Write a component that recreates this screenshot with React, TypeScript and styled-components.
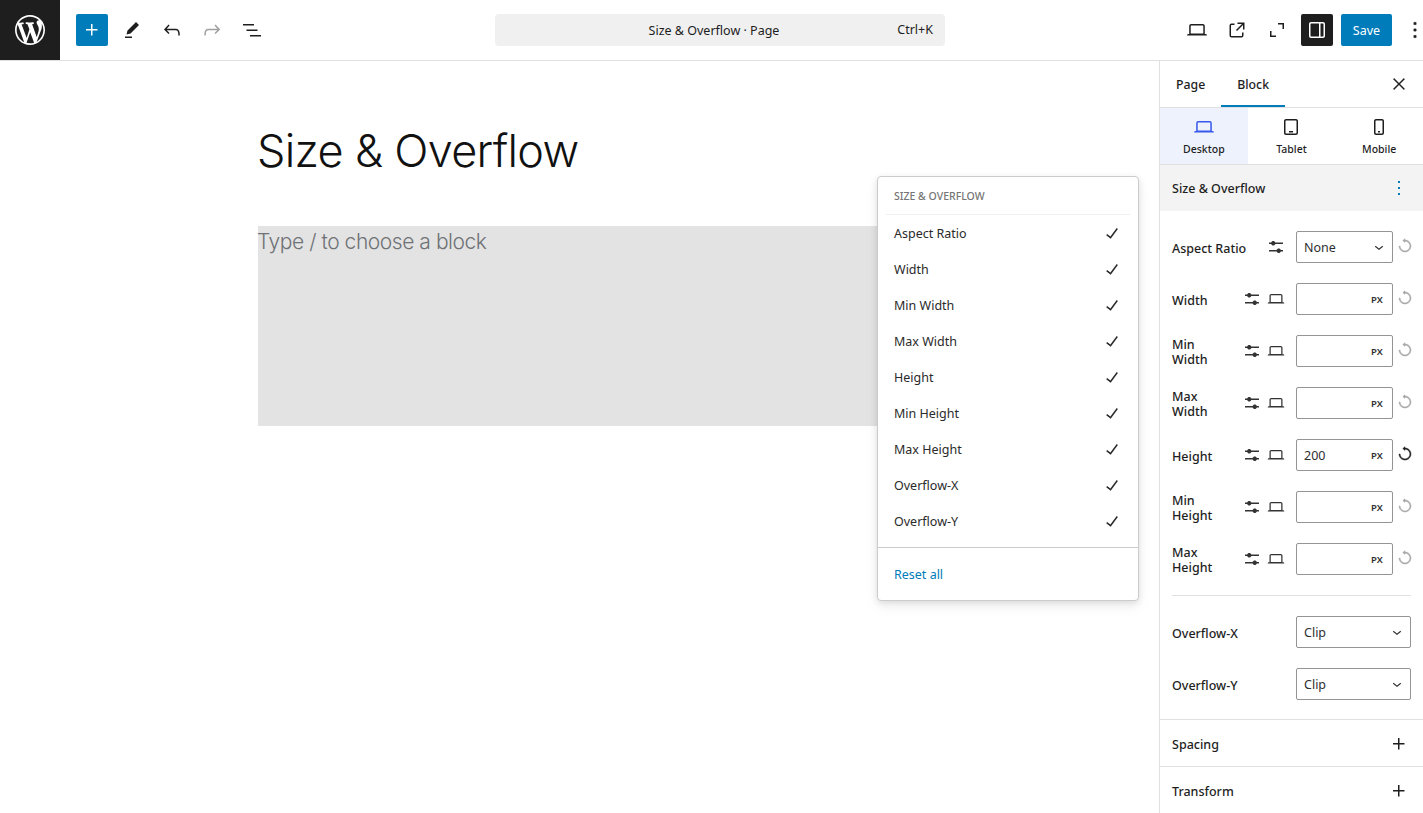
import { FC } from "react";
import styled, { createGlobalStyle } from "styled-components";

const GlobalStyle = createGlobalStyle`
	html, body {
		margin: 0;
		height: 100%;
		overflow: hidden;
		background: #fff;
	}
	body {
		font-family: "Noto Sans", "Open Sans", sans-serif;
		font-size: 13px;
		color: #1e1e1e;
	}
	* {
		box-sizing: border-box;
	}
`;

const paths = {
	plus: "M11 12.5V17.5H12.5V12.5H17.5V11H12.5V6H11V11H6V12.5H11Z",
	pencil: "m19 7-3-3-8.5 8.5-1 4 4-1L19 7Zm-7 11.5H5V20h7v-1.5Z",
	undo: "M18.3 11.7c-.6-.6-1.4-.9-2.3-.9H6.7l2.9-3.3-1.1-1-4.5 5L8.5 16l1-1-2.7-2.7H16c.5 0 .9.2 1.3.5 1 1 1 3.4 1 4.5v.3h1.5v-.2c0-1.5 0-4.3-1.5-5.7z",
	redo: "M15.6 6.5l-1.1 1 2.9 3.3H8c-.9 0-1.7.3-2.3.9-1.4 1.5-1.4 4.2-1.4 5.6v.2h1.5v-.3c0-1.1 0-3.5 1-4.5.3-.3.7-.5 1.3-.5h9.2L14.5 15l1.1 1.1 4.6-4.6-4.6-5z",
	list: "M3 6h11v1.5H3V6Zm3.5 5.5h11V13h-11v-1.5ZM21 17H10v1.5h11V17Z",
	desktop: "M20.5 16h-.7V8c0-1.1-.9-2-2-2H6.2c-1.1 0-2 .9-2 2v8h-.7c-.8 0-1.5.7-1.5 1.5h20c0-.8-.7-1.5-1.5-1.5zM5.7 8c0-.3.2-.5.5-.5h11.6c.3 0 .5.2.5.5v7.6H5.7V8z",
	external: "M19.5 4.5h-7V6h4.44l-5.97 5.97 1.06 1.06L18 7.06v4.44h1.5v-7Zm-13 1a2 2 0 0 0-2 2v10a2 2 0 0 0 2 2h10a2 2 0 0 0 2-2v-3H17v3a.5.5 0 0 1-.5.5h-10a.5.5 0 0 1-.5-.5v-10a.5.5 0 0 1 .5-.5h3V5.5h-3Z",
	fullscreen: "M13 5h6v6h-1.5V6.5H13V5ZM5 13h1.5v4.5H11V19H5v-6Z",
	drawer: "M18 4H6c-1.1 0-2 .9-2 2v12c0 1.1.9 2 2 2h12c1.1 0 2-.9 2-2V6c0-1.1-.9-2-2-2zm-4 14.5H6c-.3 0-.5-.2-.5-.5V6c0-.3.2-.5.5-.5h8v13zm4.5-.5c0 .3-.2.5-.5.5h-2.5v-13H18c.3 0 .5.2.5.5v12z",
	more: "M13 19h-2v-2h2v2zm0-6h-2v-2h2v2zm0-6h-2V5h2v2z",
	close: "m13.06 12 6.47-6.47-1.06-1.06L12 10.94 5.53 4.47 4.47 5.53 10.94 12l-6.47 6.47 1.06 1.06L12 13.06l6.47 6.47 1.06-1.06L13.06 12Z",
	tablet: "M17 4H7c-1.1 0-2 .9-2 2v12c0 1.1.9 2 2 2h10c1.1 0 2-.9 2-2V6c0-1.1-.9-2-2-2zm.5 14c0 .3-.2.5-.5.5H7c-.3 0-.5-.2-.5-.5V6c0-.3.2-.5.5-.5h10c.3 0 .5.2.5.5v12zm-7.5-.5h4V16h-4v1.5z",
	mobile: "M15 4H9c-1.1 0-2 .9-2 2v12c0 1.1.9 2 2 2h6c1.1 0 2-.9 2-2V6c0-1.1-.9-2-2-2zm.5 14c0 .3-.2.5-.5.5H9c-.3 0-.5-.2-.5-.5V6c0-.3.2-.5.5-.5h6c.3 0 .5.2.5.5v12zm-4.5-.5h2V16h-2v1.5z",
	check: "M16.7 7.1l-6.3 8.5-3.3-2.5-.9 1.2 4.5 3.4L17.9 8z",
	sliders:
		"m19 7.5h-7.628c-.3089-.87389-1.1423-1.5-2.122-1.5-.97966 0-1.81309.62611-2.12197 1.5h-2.12803v1.5h2.12803c.30888.87389 1.14231 1.5 2.12197 1.5.9797 0 1.8131-.62611 2.122-1.5h7.628zm0 7.5h-2.128c-.3089-.8739-1.1423-1.5-2.122-1.5s-1.8131.6261-2.122 1.5h-7.628v1.5h7.628c.3089.8739 1.1423 1.5 2.122 1.5s1.8131-.6261 2.122-1.5h2.128z",
	reset: "M12 4V2.2L9 4.8l3 2.5V5.5c3.6 0 6.5 2.9 6.5 6.5s-2.9 6.5-6.5 6.5-6.5-2.9-6.5-6.5H4c0 4.4 3.6 8 8 8s8-3.6 8-8-3.6-8-8-8z",
	chevron: "M17.5 11.6L12 16l-5.5-4.4.9-1.2L12 14l4.5-3.6 1 1.2z",
};

const Icon: FC<{ name: keyof typeof paths; size?: number }> = ({ name, size = 24 }) => (
	<svg width={size} height={size} viewBox="0 0 24 24" fill="currentColor">
		<path d={paths[name]} />
	</svg>
);

const Page = styled.div`
	width: 1423px;
	height: 813px;
	display: flex;
	flex-direction: column;
	overflow: hidden;
`;

const TopBar = styled.header`
	flex: none;
	height: 61px;
	display: flex;
	align-items: center;
	border-bottom: 1px solid #e0e0e0;
`;

const LogoTile = styled.div`
	width: 60px;
	height: 60px;
	background: #1e1e1e;
	color: #fff;
	display: flex;
	align-items: center;
	justify-content: center;
`;

const LeftTools = styled.div`
	width: 435px;
	display: flex;
	align-items: center;
	padding-left: 16px;
`;

const AddButton = styled.div`
	width: 32px;
	height: 32px;
	margin-right: 4px;
	border-radius: 2px;
	background: #007cba;
	color: #fff;
	display: flex;
	align-items: center;
	justify-content: center;
`;

const ToolButton = styled.div<{ $muted?: boolean }>`
	width: 40px;
	height: 32px;
	color: ${({ $muted }) => ($muted ? "#a0a0a0" : "#1e1e1e")};
	display: flex;
	align-items: center;
	justify-content: center;
`;

const CommandBar = styled.div`
	position: relative;
	width: 450px;
	height: 32px;
	padding-right: 12px;
	border-radius: 4px;
	background: #f0f0f0;
	display: flex;
	align-items: center;
	justify-content: center;
	font-size: 12.5px;
`;

const Shortcut = styled.span`
	position: absolute;
	right: 12px;
	top: 7px;
`;

const RightTools = styled.div`
	flex: 1;
	display: flex;
	align-items: center;
	justify-content: flex-end;
`;

const SidebarToggle = styled.div`
	width: 32px;
	height: 32px;
	margin-left: 4px;
	border-radius: 2px;
	background: #1e1e1e;
	color: #fff;
	display: flex;
	align-items: center;
	justify-content: center;
`;

const SaveButton = styled.div`
	width: 51px;
	height: 32px;
	margin-left: 8px;
	border-radius: 2px;
	background: #007cba;
	color: #fff;
	font-size: 12.5px;
	display: flex;
	align-items: center;
	justify-content: center;
`;

const OptionsButton = styled.div`
	width: 16px;
	height: 32px;
	margin-left: 15px;
	display: flex;
	align-items: center;
	justify-content: center;
	svg {
		flex: none;
		stroke: currentColor;
		stroke-width: 0.6;
	}
`;

const Body = styled.div`
	flex: 1;
	min-height: 0;
	display: flex;
`;

const Editor = styled.main`
	position: relative;
	flex: 1;
	padding: 56px 258px 0;
`;

const Title = styled.h1`
	margin: 0 0 43px -1px;
	height: 66px;
	font-family: Inter, sans-serif;
	font-size: 45px;
	line-height: 68px;
	font-weight: 300;
	letter-spacing: -0.7px;
	color: #111;
	white-space: nowrap;
`;

const Block = styled.div`
	height: 200px;
	background: #e3e3e3;
	font-family: Inter, sans-serif;
	font-size: 21px;
	font-weight: 300;
	line-height: 31px;
	letter-spacing: -0.45px;
	text-indent: -1px;
	color: #6f7276;
`;

const Popover = styled.div`
	position: absolute;
	left: 877px;
	top: 115px;
	width: 262px;
	height: 425px;
	background: #fff;
	border: 1px solid #ccc;
	border-radius: 4px;
	box-shadow: 0 2px 6px rgba(0, 0, 0, 0.1), 0 6px 14px rgba(0, 0, 0, 0.06);
`;

const PopoverList = styled.div`
	padding: 0 8px 8px;
	border-bottom: 1px solid #ccc;
`;

const PopoverHeading = styled.div`
	height: 38px;
	padding: 0 8px;
	border-bottom: 1px solid #f0f0f0;
	font-size: 10.5px;
	font-weight: 500;
	line-height: 39px;
	color: #757575;
`;

const PopoverItem = styled.div`
	height: 36px;
	padding: 0 6px 0 8px;
	display: flex;
	align-items: center;
	justify-content: space-between;
	font-size: 12.5px;
	color: #2a2a2a;
`;

const ResetAll = styled.div`
	height: 52px;
	padding: 0 16px;
	display: flex;
	align-items: center;
	font-size: 12.5px;
	color: #007cba;
`;

const Sidebar = styled.aside`
	flex: none;
	width: 263px;
	border-left: 1px solid #e0e0e0;
	box-sizing: content-box;
`;

const TabBar = styled.div`
	height: 47px;
	display: flex;
	align-items: stretch;
	border-bottom: 1px solid #e0e0e0;
`;

const Tab = styled.div<{ $active?: boolean }>`
	padding: 0 16px;
	display: flex;
	align-items: center;
	font-size: 12.3px;
	font-weight: 500;
	color: #1e1e1e;
	box-shadow: ${({ $active }) => ($active ? "inset 0 -2px 0 #007cba" : "none")};
`;

const CloseButton = styled.div`
	margin-left: auto;
	width: 48px;
	display: flex;
	align-items: center;
	justify-content: center;
	svg {
		stroke: currentColor;
		stroke-width: 0.5;
	}
`;

const DeviceBar = styled.div`
	height: 57px;
	display: grid;
	grid-template-columns: repeat(3, 1fr);
	border-bottom: 1px solid #e0e0e0;
`;

const DeviceTab = styled.div<{ $active?: boolean }>`
	padding-top: 7px;
	display: flex;
	flex-direction: column;
	align-items: center;
	gap: 2px;
	font-size: 10.5px;
	font-weight: 500;
	line-height: 16px;
	background: ${({ $active }) => ($active ? "#edf2fd" : "#fff")};
	color: #1e1e1e;
	svg {
		color: ${({ $active }) => ($active ? "#3858e9" : "#1e1e1e")};
	}
`;

const PanelHeader = styled.div`
	height: 46px;
	padding: 0 12px;
	display: flex;
	align-items: center;
	justify-content: space-between;
	background: #f3f3f3;
	font-size: 12.5px;
	font-weight: 500;
	svg {
		color: #007cba;
	}
`;

const PanelBody = styled.div`
	padding: 20px 12px 19px;
	border-bottom: 1px solid #e0e0e0;
	display: flex;
	flex-direction: column;
	gap: 20px;
`;

const Row = styled.div`
	height: 32px;
	display: flex;
	align-items: center;
`;

const RowLabel = styled.div<{ $narrow?: boolean }>`
	flex: 1;
	min-width: 0;
	padding-top: 2px;
	padding-right: ${({ $narrow }) => ($narrow ? "16px" : "0")};
	font-size: 12.5px;
	font-weight: 500;
	line-height: 15px;
`;

const RowIcon = styled.div`
	width: 24px;
	height: 32px;
	display: flex;
	align-items: center;
	justify-content: center;
	color: #333;
`;

const Field = styled.div<{ $wide?: boolean }>`
	width: ${({ $wide }) => ($wide ? "115px" : "97px")};
	height: 32px;
	margin-left: ${({ $wide }) => ($wide ? "0" : "8px")};
	padding: 0 4px 0 7px;
	display: flex;
	align-items: center;
	justify-content: space-between;
	border: 1px solid #949494;
	border-radius: 2px;
	font-size: 12.5px;
	color: #2f2f2f;
`;

const Unit = styled.span`
	margin-left: auto;
	margin-right: 5px;
	font-size: 9.5px;
	font-weight: 600;
	letter-spacing: 0.2px;
`;

const ResetButton = styled.div<{ $active?: boolean }>`
	width: 18px;
	height: 32px;
	padding-bottom: 3px;
	display: flex;
	align-items: center;
	justify-content: flex-end;
	color: ${({ $active }) => ($active ? "#1e1e1e" : "#a8a8a8")};
	svg {
		margin-right: -3px;
		stroke: currentColor;
		stroke-width: 0.6;
	}
`;

const Separator = styled.hr`
	width: 100%;
	margin: 0;
	border: 0;
	border-top: 1px solid #e0e0e0;
`;

const CollapsedPanel = styled.div`
	height: 47px;
	padding: 2px 12px 0;
	display: flex;
	align-items: center;
	justify-content: space-between;
	border-bottom: 1px solid #e0e0e0;
	font-size: 12.5px;
	font-weight: 500;
`;

const WpLogo: FC = () => (
	<svg width={36} height={36} viewBox="-2 -2 24 24" fill="currentColor">
		<path d="M20 10c0-5.51-4.49-10-10-10C4.48 0 0 4.49 0 10c0 5.52 4.48 10 10 10 5.51 0 10-4.48 10-10zM7.78 15.37L4.37 6.22c.55-.02 1.17-.08 1.17-.08.5-.06.44-1.13-.06-1.11 0 0-1.45.11-2.37.11-.18 0-.37 0-.58-.01C4.12 2.69 6.87 1.11 10 1.11c2.33 0 4.45.87 6.05 2.34-.68-.11-1.65.39-1.65 1.58 0 .74.45 1.36.9 2.1.35.61.55 1.36.55 2.46 0 1.49-1.4 5-1.4 5l-3.03-8.37c.54-.02.82-.17.82-.17.5-.05.44-1.25-.06-1.22 0 0-1.44.12-2.38.12-.87 0-2.33-.12-2.33-.12-.5-.03-.56 1.2-.06 1.22l.92.08 1.26 3.41zM17.41 10c.24-.64.74-1.87.43-4.25.7 1.29 1.05 2.71 1.05 4.25 0 3.29-1.73 6.24-4.4 7.78.97-2.59 1.94-5.2 2.92-7.78zM6.1 18.09C3.12 16.65 1.11 13.53 1.11 10c0-1.3.23-2.48.72-3.59C3.25 10.3 4.67 14.2 6.1 18.09zm4.03-6.63l2.58 6.98c-.86.29-1.76.45-2.71.45-.79 0-1.57-.11-2.29-.33.81-2.38 1.62-4.74 2.42-7.1z" />
	</svg>
);

const menuItems = [
	"Aspect Ratio",
	"Width",
	"Min Width",
	"Max Width",
	"Height",
	"Min Height",
	"Max Height",
	"Overflow-X",
	"Overflow-Y",
];

const sizeRows = [
	{ label: "Width" },
	{ label: "Min Width" },
	{ label: "Max Width" },
	{ label: "Height", value: "200" },
	{ label: "Min Height" },
	{ label: "Max Height" },
];

const App: FC = () => (
	<Page>
		<GlobalStyle />
		<TopBar>
			<LogoTile>
				<WpLogo />
			</LogoTile>
			<LeftTools>
				<AddButton>
					<Icon name="plus" />
				</AddButton>
				<ToolButton>
					<Icon name="pencil" />
				</ToolButton>
				<ToolButton>
					<Icon name="undo" />
				</ToolButton>
				<ToolButton $muted>
					<Icon name="redo" />
				</ToolButton>
				<ToolButton>
					<Icon name="list" />
				</ToolButton>
			</LeftTools>
			<CommandBar>
				Size &amp; Overflow · Page
				<Shortcut>Ctrl+K</Shortcut>
			</CommandBar>
			<RightTools>
				<ToolButton>
					<Icon name="desktop" />
				</ToolButton>
				<ToolButton>
					<Icon name="external" />
				</ToolButton>
				<ToolButton>
					<Icon name="fullscreen" />
				</ToolButton>
				<SidebarToggle>
					<Icon name="drawer" />
				</SidebarToggle>
				<SaveButton>Save</SaveButton>
				<OptionsButton>
					<Icon name="more" size={26} />
				</OptionsButton>
			</RightTools>
		</TopBar>
		<Body>
			<Editor>
				<Title>Size &amp; Overflow</Title>
				<Block>Type / to choose a block</Block>
				<Popover>
					<PopoverList>
						<PopoverHeading>SIZE &amp; OVERFLOW</PopoverHeading>
						{menuItems.map((item) => (
							<PopoverItem key={item}>
								{item}
								<Icon name="check" />
							</PopoverItem>
						))}
					</PopoverList>
					<ResetAll>Reset all</ResetAll>
				</Popover>
			</Editor>
			<Sidebar>
				<TabBar>
					<Tab>Page</Tab>
					<Tab $active>Block</Tab>
					<CloseButton>
						<Icon name="close" size={18} />
					</CloseButton>
				</TabBar>
				<DeviceBar>
					<DeviceTab $active>
						<Icon name="desktop" />
						Desktop
					</DeviceTab>
					<DeviceTab>
						<Icon name="tablet" />
						Tablet
					</DeviceTab>
					<DeviceTab>
						<Icon name="mobile" />
						Mobile
					</DeviceTab>
				</DeviceBar>
				<PanelHeader>
					Size &amp; Overflow
					<Icon name="more" />
				</PanelHeader>
				<PanelBody>
					<Row>
						<RowLabel>Aspect Ratio</RowLabel>
						<RowIcon>
							<Icon name="sliders" />
						</RowIcon>
						<Field>
							None
							<Icon name="chevron" size={18} />
						</Field>
						<ResetButton>
							<Icon name="reset" size={18} />
						</ResetButton>
					</Row>
					{sizeRows.map(({ label, value }) => (
						<Row key={label}>
							<RowLabel $narrow>{label}</RowLabel>
							<RowIcon>
								<Icon name="sliders" />
							</RowIcon>
							<RowIcon>
								<Icon name="desktop" size={20} />
							</RowIcon>
							<Field>
								{value}
								<Unit>PX</Unit>
							</Field>
							<ResetButton $active={!!value}>
								<Icon name="reset" size={18} />
							</ResetButton>
						</Row>
					))}
					<Separator />
					<Row>
						<RowLabel>Overflow-X</RowLabel>
						<Field $wide>
							Clip
							<Icon name="chevron" size={18} />
						</Field>
					</Row>
					<Row>
						<RowLabel>Overflow-Y</RowLabel>
						<Field $wide>
							Clip
							<Icon name="chevron" size={18} />
						</Field>
					</Row>
				</PanelBody>
				<CollapsedPanel>
					Spacing
					<Icon name="plus" />
				</CollapsedPanel>
				<CollapsedPanel>
					Transform
					<Icon name="plus" />
				</CollapsedPanel>
			</Sidebar>
		</Body>
	</Page>
);

export default App;
